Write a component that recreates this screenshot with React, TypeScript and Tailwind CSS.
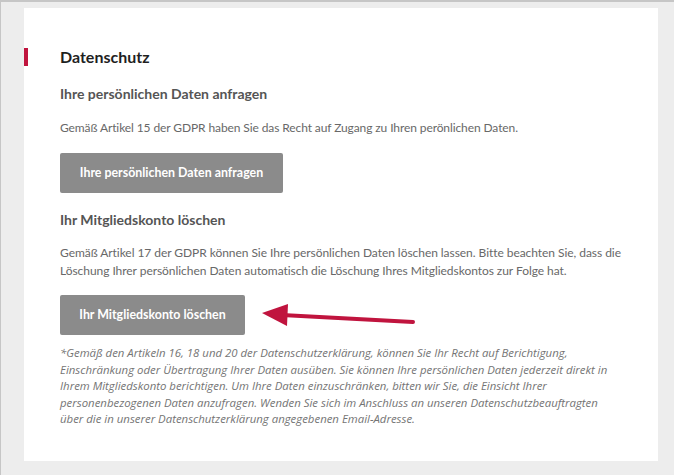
import React from "react";

export default function App() {
  return (
    <div className="w-[674px] h-[475px] bg-[#ededed] border-t-2 border-l border-[#c6c6c6] pt-[6px] pl-[23px] overflow-hidden">
      <div className="relative w-[634px] h-[453px] bg-white">
        <div className="pt-[39px] flex items-center">
          <div className="w-[4px] h-[18px] bg-[#c0143e]" />
          <h1 className="ml-[32px] text-[16px] leading-[20px] font-bold text-[#1f1f1f]" style={{ fontFamily: "Lato, sans-serif" }}>
            Datenschutz
          </h1>
        </div>
        <div className="pl-[36px]" style={{ fontFamily: "Lato, sans-serif" }}>
          <h2 className="mt-[17px] text-[14px] leading-[20px] font-bold text-[#555555]">Ihre persönlichen Daten anfragen</h2>
          <p className="mt-[15px] text-[12px] leading-[18px] tracking-[-0.1px] text-[#686868] whitespace-nowrap">
            Gemäß Artikel 15 der GDPR haben Sie das Recht auf Zugang zu Ihren perönlichen Daten.
          </p>
          <button className="mt-[16px] w-[223px] h-[40px] rounded-[2px] bg-[#8b8b8b] text-white text-[12.4px] font-bold block">
            Ihre persönlichen Daten anfragen
          </button>
          <h2 className="mt-[17px] text-[14px] leading-[20px] font-bold text-[#555555]">Ihr Mitgliedskonto löschen</h2>
          <p className="mt-[14px] text-[12px] leading-[18px] tracking-[-0.05px] text-[#686868] whitespace-nowrap">
            Gemäß Artikel 17 der GDPR können Sie Ihre persönlichen Daten löschen lassen. Bitte beachten Sie, dass die
            <br />
            Löschung Ihrer persönlichen Daten automatisch die Löschung Ihres Mitgliedskontos zur Folge hat.
          </p>
          <button className="mt-[15px] w-[185px] h-[40px] rounded-[2px] bg-[#8b8b8b] text-white text-[12.4px] font-bold block">
            Ihr Mitgliedskonto löschen
          </button>
          <p className="mt-[10px] text-[11.4px] leading-[16.6px] italic text-[#747474] whitespace-nowrap" style={{ fontFamily: "'Open Sans', sans-serif" }}>
            *Gemäß den Artikeln 16, 18 und 20 der Datenschutzerklärung, können Sie Ihr Recht auf Berichtigung,
            <br />
            Einschränkung oder Übertragung Ihrer Daten ausüben. Sie können Ihre persönlichen Daten jederzeit direkt in
            <br />
            Ihrem Mitgliedskonto berichtigen. Um Ihre Daten einzuschränken, bitten wir Sie, die Einsicht Ihrer
            <br />
            personenbezogenen Daten anzufragen. Wenden Sie sich im Anschluss an unseren Datenschutzbeauftragten
            <br />
            über die in unserer Datenschutzerklärung angegebenen Email-Adresse.
          </p>
        </div>
        <svg className="absolute left-0 top-0 pointer-events-none" width="634" height="453" viewBox="0 0 634 453">
          <line x1="258" y1="307" x2="389" y2="314" stroke="#c0143e" strokeWidth="4" strokeLinecap="round" />
          <polygon points="238,305 264,296 263,318" fill="#c0143e" />
        </svg>
      </div>
    </div>
  );
}
